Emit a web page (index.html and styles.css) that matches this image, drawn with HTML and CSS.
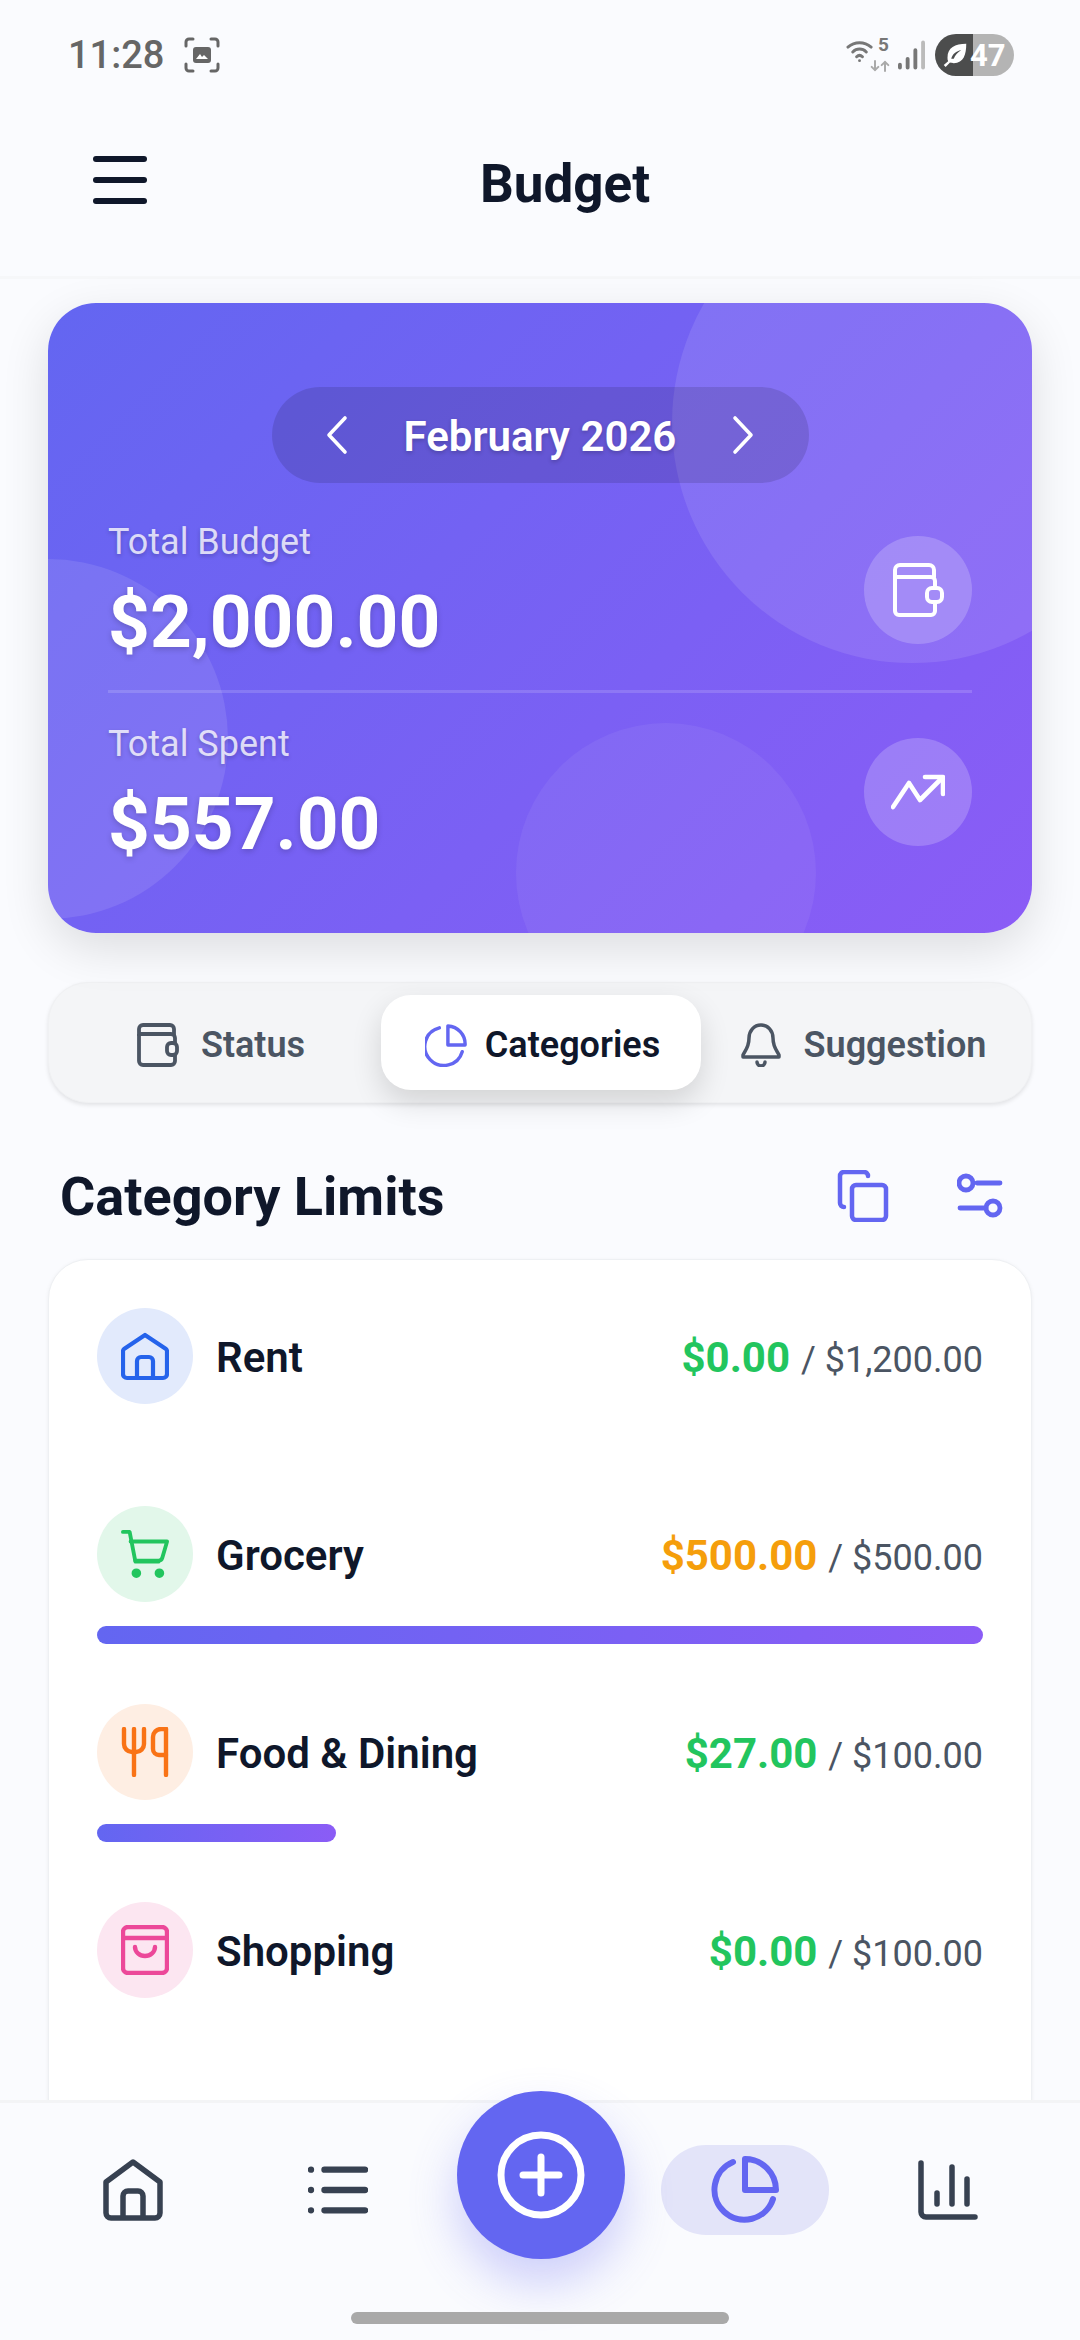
FILE: index.html
```html
<!DOCTYPE html>
<html lang="en">
<head>
  <meta charset="UTF-8" />
  <meta name="viewport" content="width=device-width, initial-scale=1.0"/>
  <title>Budget</title>
  <link rel="stylesheet" href="styles.css">
</head>
<body>

  <!-- Status bar -->
  <div class="status-bar">
    <div class="status-left">
      <span class="time">11:28</span>
      <svg class="capture" viewBox="0 0 36 36" fill="none" stroke="#666" stroke-width="3" stroke-linecap="round">
        <path d="M2 9V5a3 3 0 0 1 3-3h4M27 2h4a3 3 0 0 1 3 3v4M34 27v4a3 3 0 0 1-3 3h-4M9 34H5a3 3 0 0 1-3-3v-4"/>
        <rect x="9" y="10" width="18" height="16" rx="3" fill="#666" stroke="none"/>
        <path d="M12 22l4-5 2 3 2-2 4 4z" fill="#fff" stroke="none"/>
      </svg>
    </div>
    <div class="status-right">
      <div class="wifi">
        <svg viewBox="0 0 30 24" fill="none" stroke="#777" stroke-width="3" stroke-linecap="round">
          <path d="M2 8c7-6 17-6 24 0M7 13c4-4 10-4 14 0M11 18c2-2 4-2 6 0"/>
          <circle cx="14" cy="22" r="1.5" fill="#777" stroke="none"/>
        </svg>
        <span class="wifi-num">5</span>
        <svg class="wifi-arrows" viewBox="0 0 24 14" fill="none" stroke="#aaa" stroke-width="2.4" stroke-linecap="round" stroke-linejoin="round">
          <path d="M6 1v11M2 8l4 4 4-4M18 13V2M14 6l4-4 4 4"/>
        </svg>
      </div>
      <svg class="signal" viewBox="0 0 28 30" stroke-width="4" stroke-linecap="round">
        <path d="M2 28v-3M10 28V19M18 28V10" stroke="#777"/>
        <path d="M26 28V2" stroke="#bbb"/>
      </svg>
      <div class="battery">
        <svg viewBox="0 0 24 24" fill="#fff"><path d="M21 3c-9 0-15 3-15 11 0 1 0 2 .5 3L3 20l1.500 1.500 3.500-3.500c1 .5 2 .5 3 .5 8 0 10-7 10-15.500zM9 15c1-4 4-6 8-7-3 2-5 4-6 7z"/></svg>
        <span>47</span>
      </div>
    </div>
  </div>

  <!-- Header -->
  <header class="app-header">
    <div class="menu-btn"><span></span><span></span><span></span></div>
    <h1 class="page-title">Budget</h1>
  </header>

  <main class="content">

    <!-- Summary card -->
    <section class="hero">
      <div class="blob blob-a"></div>
      <div class="blob blob-b"></div>
      <div class="blob blob-c"></div>

      <div class="month-wrap">
        <div class="month-pill">
          <svg viewBox="0 0 24 40" fill="none" stroke="#fff" stroke-width="3.600" stroke-linecap="round" stroke-linejoin="round"><path d="M21 3L5 20l16 17"/></svg>
          <span>February 2026</span>
          <svg viewBox="0 0 24 40" fill="none" stroke="#fff" stroke-width="3.600" stroke-linecap="round" stroke-linejoin="round"><path d="M3 3l16 17L3 37"/></svg>
        </div>
      </div>

      <div class="stat stat-first">
        <div>
          <div class="stat-label">Total Budget</div>
          <div class="stat-value">$2,000.00</div>
        </div>
        <div class="stat-icon">
          <svg viewBox="0 0 54 54" fill="none" stroke="#fff" stroke-width="4" stroke-linejoin="round" stroke-linecap="round">
            <path d="M4 16V7a5 5 0 0 1 5-5h29a5 5 0 0 1 5 5v7"/>
            <path d="M4 14v34a4 4 0 0 0 4 4h32a4 4 0 0 0 4-4v-9M44 25v-7a4 4 0 0 0-4-4H4"/>
            <rect x="36" y="25" width="15" height="14" rx="5"/>
          </svg>
        </div>
      </div>
      <div class="stat-divider"></div>
      <div class="stat">
        <div>
          <div class="stat-label">Total Spent</div>
          <div class="stat-value">$557.00</div>
        </div>
        <div class="stat-icon">
          <svg viewBox="0 0 54 54" fill="none" stroke="#fff" stroke-width="4.600" stroke-linejoin="round" stroke-linecap="round">
            <path d="M2 42l16-24 11 17 22-22"/>
            <path d="M34 12h18v17"/>
          </svg>
        </div>
      </div>
    </section>

    <!-- Tabs -->
    <nav class="tabs">
      <div class="tab tab-status">
        <svg viewBox="0 0 42 44" fill="none" stroke="#4b5563" stroke-width="3.800" stroke-linejoin="round">
          <path d="M2 13V6a4 4 0 0 1 4-4h27a4 4 0 0 1 4 4v6"/>
          <path d="M2 11v27a4 4 0 0 0 4 4h28a4 4 0 0 0 4-4v-6M38 20v-5a4 4 0 0 0-4-4H2"/>
          <rect x="30" y="20" width="10" height="12" rx="4"/>
        </svg>
        <span>Status</span>
      </div>
      <div class="tab tab-active">
        <svg viewBox="0 0 44 44" fill="none" stroke="#6366f1" stroke-width="3.600" stroke-linecap="round" stroke-linejoin="round">
          <path d="M39 29A20 20 0 1 1 15 4"/>
          <path d="M24 2v20h18A19 19 0 0 0 24 2z"/>
        </svg>
        <span>Categories</span>
      </div>
      <div class="tab tab-suggest">
        <svg viewBox="0 0 42 44" fill="none" stroke="#4b5563" stroke-width="3.500" stroke-linecap="round" stroke-linejoin="round">
          <path d="M21 2c-7 0-12 6-12 13 0 10-5 14-6 17v2h36v-2c-1-3-6-7-6-17 0-7-5-13-12-13z"/>
          <path d="M17 39a4 4 0 0 0 8 0"/>
        </svg>
        <span>Suggestion</span>
      </div>
    </nav>

    <!-- Category limits -->
    <div class="section-head">
      <h2>Category Limits</h2>
      <div class="section-actions">
        <svg class="ico-copy" viewBox="0 0 52 52" fill="none" stroke="#6366f1" stroke-width="4.500" stroke-linejoin="round" stroke-linecap="round">
          <rect x="15" y="15" width="34" height="35" rx="4"/>
          <path d="M7 37a4 4 0 0 1-4-4V6a4 4 0 0 1 4-4h20a4 4 0 0 1 4 4"/>
        </svg>
        <svg class="ico-sliders" viewBox="0 0 46 46" fill="none" stroke="#6366f1" stroke-width="4.800" stroke-linecap="round">
          <circle cx="9" cy="10" r="7"/>
          <path d="M20 10h23"/>
          <circle cx="36" cy="35" r="7"/>
          <path d="M3 35h26"/>
        </svg>
      </div>
    </div>

    <section class="limit-card">
      <div class="limit">
        <div class="limit-row">
          <div class="cat-icon cat-blue">
            <svg viewBox="0 0 48 48" fill="none" stroke="#2563eb" stroke-width="4.200" stroke-linejoin="round">
              <path d="M3 17L24 3l21 14a3 3 0 0 1 1 2v23a4 4 0 0 1-4 4H6a4 4 0 0 1-4-4V19a3 3 0 0 1 1-2z"/>
              <path d="M16 46V29a4 4 0 0 1 4-4h8a4 4 0 0 1 4 4v17"/>
            </svg>
          </div>
          <span class="cat-name">Rent</span>
          <span class="amount"><b class="ok">$0.00</b> <i>/ $1,200.00</i></span>
        </div>
      </div>
      <div class="limit">
        <div class="limit-row">
          <div class="cat-icon cat-green">
            <svg viewBox="0 0 50 50" fill="none" stroke="#22c55e" stroke-width="4" stroke-linejoin="round" stroke-linecap="round">
              <path d="M2 2h7l6 31h24"/>
              <path d="M10 12h38l-5 17a4 4 0 0 1-4 3H15"/>
              <circle cx="16" cy="45" r="3" fill="#22c55e"/>
              <circle cx="40" cy="45" r="3" fill="#22c55e"/>
            </svg>
          </div>
          <span class="cat-name">Grocery</span>
          <span class="amount"><b class="warn">$500.00</b> <i>/ $500.00</i></span>
        </div>
        <div class="bar"><div class="bar-fill" style="width: 100%"></div></div>
      </div>
      <div class="limit">
        <div class="limit-row">
          <div class="cat-icon cat-orange">
            <svg viewBox="0 0 48 50" fill="none" stroke="#f97316" stroke-width="4.400" stroke-linecap="round" stroke-linejoin="round">
              <path d="M3 2v15a8 8 0 0 0 8 8h4a8 8 0 0 0 8-8V2"/>
              <path d="M13 2v46"/>
              <path d="M45 2h-5a8 8 0 0 0-8 8v12a6 6 0 0 0 6 6h7"/>
              <path d="M45 2v46"/>
            </svg>
          </div>
          <span class="cat-name">Food &amp; Dining</span>
          <span class="amount"><b class="ok">$27.00</b> <i>/ $100.00</i></span>
        </div>
        <div class="bar"><div class="bar-fill" style="width: 27%"></div></div>
      </div>
      <div class="limit">
        <div class="limit-row">
          <div class="cat-icon cat-pink">
            <svg viewBox="0 0 48 50" fill="none" stroke="#ec4899" stroke-width="4.400" stroke-linecap="round" stroke-linejoin="round">
              <rect x="2" y="2" width="44" height="46" rx="5"/>
              <path d="M2 13h44"/>
              <path d="M14 22a10 9 0 0 0 20 0"/>
            </svg>
          </div>
          <span class="cat-name">Shopping</span>
          <span class="amount"><b class="ok">$0.00</b> <i>/ $100.00</i></span>
        </div>
      </div>
    </section>
  </main>

  <!-- Bottom navigation -->
  <footer class="bottom-nav">
    <div class="nav-item">
      <svg viewBox="0 0 60 62" fill="none" stroke="#374151" stroke-width="5.500" stroke-linejoin="round">
        <path d="M3 23L30 3l27 20v31a5 5 0 0 1-5 5H8a5 5 0 0 1-5-5z"/>
        <path d="M20 59V37a5 5 0 0 1 5-5h10a5 5 0 0 1 5 5v22"/>
      </svg>
    </div>
    <div class="nav-item">
      <svg viewBox="0 0 62 48" fill="none" stroke="#374151" stroke-width="6.500" stroke-linecap="round">
        <path d="M17 3h42M17 24h42M17 45h42"/>
        <path d="M3 3h.1M3 24h.1M3 45h.1"/>
      </svg>
    </div>
    <div class="nav-spacer"></div>
    <div class="nav-item nav-active">
      <svg viewBox="0 0 68 68" fill="none" stroke="#6366f1" stroke-width="6" stroke-linecap="round" stroke-linejoin="round">
        <path d="M62 43A30 30 0 1 1 22 6"/>
        <path d="M34 3v31h31A31 31 0 0 0 34 3z"/>
      </svg>
    </div>
    <div class="nav-item">
      <svg viewBox="0 0 60 60" fill="none" stroke="#374151" stroke-width="5.500" stroke-linecap="round" stroke-linejoin="round">
        <path d="M3 3v49a5 5 0 0 0 5 5h49"/>
        <path d="M19 44V33M34 44V7M49 44V19"/>
      </svg>
    </div>

    <div class="fab">
      <svg viewBox="0 0 88 88" fill="none" stroke="#fff" stroke-width="7" stroke-linecap="round">
        <circle cx="44" cy="44" r="40"/>
        <path d="M44 26v36M26 44h36"/>
      </svg>
    </div>
    <div class="home-indicator"></div>
  </footer>

</body>
</html>
```

FILE: styles.css
```css
* {
  box-sizing: border-box;
}

html, body {
  margin: 0;
  padding: 0;
}

body {
  width: 1080px;
  height: 2340px;
  overflow: hidden;
  position: relative;
  background: #fafbfe;
  font-family: Roboto, "Noto Sans", sans-serif;
  color: #0f172a;
}

svg {
  display: block;
}

/* status bar */
.status-bar {
  height: 80px;
  padding: 30px 66px 0 68px;
  display: flex;
  align-items: center;
  justify-content: space-between;
}

.status-left,
.status-right {
  display: flex;
  align-items: center;
}

.time {
  font-size: 38px;
  font-weight: 500;
  color: #666;
}

.capture {
  width: 36px;
  height: 36px;
  margin-left: 20px;
}

.wifi {
  position: relative;
  width: 44px;
  height: 32px;
}

.wifi > svg:first-child {
  width: 29px;
  height: 24px;
}

.wifi-num {
  position: absolute;
  right: 1px;
  top: -6px;
  font-size: 19px;
  font-weight: 700;
  color: #777;
}

.wifi-arrows {
  position: absolute;
  right: 0;
  bottom: -2px;
  width: 20px;
  height: 14px;
}

.signal {
  width: 27px;
  height: 30px;
  margin-left: 8px;
}

.battery {
  width: 79px;
  height: 42px;
  margin-left: 10px;
  border-radius: 21px;
  background: linear-gradient(to right, #4c4d4d 48%, #b4b4b4 48%);
  display: flex;
  align-items: center;
  padding-left: 5px;
  color: #fff;
  font-size: 31px;
  font-weight: 700;
}

.battery svg {
  width: 30px;
  height: 30px;
}

/* header */
.app-header {
  height: 199px;
  padding: 0 97px 0 93px;
  display: flex;
  align-items: center;
  border-bottom: 3px solid #f6f7f9;
}

.menu-btn {
  width: 54px;
  display: flex;
  flex-direction: column;
  gap: 15px;
  margin-top: 3px;
}

.menu-btn span {
  height: 6px;
  border-radius: 3px;
  background: #0f172a;
}

.page-title {
  flex: 1;
  margin: 12px 0 0;
  text-align: center;
  font-size: 53px;
  font-weight: 700;
}

/* main */
.content {
  padding: 24px 48px 0;
}

.hero {
  position: relative;
  height: 630px;
  padding: 84px 60px 0;
  border-radius: 48px;
  overflow: hidden;
  background: linear-gradient(135deg, #6366f1, #8b5cf6);
  color: #fff;
  box-shadow: 0 16px 48px rgba(0, 0, 0, 0.12);
}

.blob {
  position: absolute;
  border-radius: 50%;
  background: rgba(255, 255, 255, 0.1);
}

.blob-a {
  width: 480px;
  height: 480px;
  top: -120px;
  right: -120px;
}

.blob-b {
  width: 360px;
  height: 360px;
  left: -180px;
  bottom: 14px;
}

.blob-c {
  width: 300px;
  height: 300px;
  left: 468px;
  bottom: -90px;
  background: rgba(255, 255, 255, 0.06);
}

.month-wrap {
  position: relative;
  display: flex;
  justify-content: center;
}

.month-pill {
  width: 537px;
  height: 96px;
  border-radius: 48px;
  background: rgba(0, 0, 0, 0.12);
  display: flex;
  align-items: center;
  justify-content: space-between;
  padding: 0 52px 0 52px;
  font-size: 42px;
  font-weight: 600;
  text-shadow: 0 2px 4px rgba(0, 0, 0, 0.2);
}

.month-pill span {
  padding-top: 2px;
}

.month-pill svg {
  width: 24px;
  height: 40px;
}

.stat {
  position: relative;
  height: 143px;
  display: flex;
  align-items: center;
  justify-content: space-between;
}

.stat-first {
  margin-top: 35px;
}

.stat-label {
  margin-top: 6px;
  font-size: 36px;
  line-height: 42px;
  color: rgba(255, 255, 255, 0.78);
  text-shadow: 0 2px 4px rgba(0, 0, 0, 0.2);
}

.stat-value {
  font-size: 73px;
  font-weight: 700;
  line-height: 84px;
  margin-top: 17px;
  text-shadow: 0 2px 6px rgba(0, 0, 0, 0.2);
}

.stat-icon {
  width: 108px;
  height: 108px;
  border-radius: 50%;
  background: rgba(255, 255, 255, 0.2);
  display: flex;
  align-items: center;
  justify-content: center;
}

.stat-icon svg {
  width: 54px;
  height: 54px;
}

.stat-divider {
  position: relative;
  height: 3px;
  margin: 29px 0 27px;
  background: rgba(255, 255, 255, 0.15);
}

/* tabs */
.tabs {
  margin-top: 49px;
  height: 121px;
  padding: 12px 0;
  border-radius: 40px;
  background: #f4f5f7;
  border: 1px solid #f0f1f3;
  box-shadow: 0 2px 4px rgba(0, 0, 0, 0.1);
  display: flex;
  font-size: 36px;
  font-weight: 600;
  color: #4b5563;
}

.tab {
  display: flex;
  align-items: center;
  justify-content: center;
  gap: 22px;
  padding-top: 4px;
}

.tab svg {
  width: 42px;
  height: 44px;
}

.tab-status {
  width: 332px;
  padding-left: 12px;
}

.tab-active {
  width: 320px;
  gap: 18px;
  padding-left: 3px;
  border-radius: 30px;
  background: #fff;
  color: #0f172a;
  box-shadow: 0 12px 30px rgba(0, 0, 0, 0.14);
}

.tab-suggest {
  flex: 1;
  padding-right: 6px;
}

/* section head */
.section-head {
  margin-top: 57px;
  height: 72px;
  padding: 0 29px 0 12px;
  display: flex;
  align-items: center;
  justify-content: space-between;
}

.section-head h2 {
  margin: 0;
  font-size: 54px;
  font-weight: 700;
}

.section-actions {
  display: flex;
  align-items: center;
  gap: 68px;
}

.ico-copy {
  width: 52px;
  height: 52px;
}

.ico-sliders {
  width: 46px;
  height: 46px;
}

/* limits */
.limit-card {
  margin-top: 27px;
  height: 900px;
  padding: 48px;
  border-radius: 40px;
  background: #fff;
  border: 1px solid #eef0f3;
  box-shadow: 0 1px 4px rgba(0, 0, 0, 0.06);
}

.limit {
  height: 198px;
}

.limit-row {
  display: flex;
  align-items: center;
  height: 96px;
}

.cat-icon {
  width: 96px;
  height: 96px;
  border-radius: 50%;
  display: flex;
  align-items: center;
  justify-content: center;
}

.cat-icon svg {
  width: 48px;
  height: 50px;
}

.cat-blue { background: #e2eafc; }
.cat-green { background: #e2f7ea; }
.cat-orange { background: #feeee3; }
.cat-pink { background: #fce6f1; }

.cat-name {
  flex: 1;
  margin-left: 23px;
  padding-top: 2px;
  font-size: 42px;
  font-weight: 600;
}

.amount {
  padding-top: 3px;
  font-size: 36px;
  color: #4b5563;
}

.amount b {
  font-size: 42px;
  font-weight: 700;
}

.amount i {
  font-style: normal;
  margin-left: 2px;
}

.ok { color: #22c55e; }
.warn { color: #f59e0b; }

.bar {
  margin-top: 24px;
  height: 18px;
}

.bar-fill {
  height: 18px;
  border-radius: 9px;
  background: linear-gradient(to right, #6366f1, #8b5cf6);
}

/* bottom nav */
.bottom-nav {
  position: absolute;
  left: 0;
  right: 0;
  bottom: 0;
  height: 240px;
  padding: 42px 0 0 103px;
  background: #fafbfe;
  border-top: 3px solid #f3f4f6;
  display: flex;
  align-items: flex-start;
}

.nav-item {
  width: 60px;
  height: 90px;
  display: flex;
  align-items: center;
  justify-content: center;
  flex-shrink: 0;
}

.nav-item svg {
  width: 60px;
  height: 62px;
}

.nav-item:nth-child(2) {
  margin-left: 145px;
}

.nav-spacer {
  width: 293px;
}

.nav-active {
  width: 168px;
  border-radius: 45px;
  background: #e3e4f9;
}

.nav-active svg {
  width: 68px;
  height: 68px;
}

.nav-item:nth-child(5) {
  margin-left: 89px;
}

.fab {
  position: absolute;
  left: 457px;
  top: -12px;
  width: 168px;
  height: 168px;
  border-radius: 50%;
  background: #6366f1;
  box-shadow: 0 24px 48px rgba(99, 102, 241, 0.3);
  display: flex;
  align-items: center;
  justify-content: center;
}

.fab svg {
  width: 88px;
  height: 88px;
}

.home-indicator {
  position: absolute;
  left: 351px;
  bottom: 16px;
  width: 378px;
  height: 12px;
  border-radius: 6px;
  background: #a9a9a9;
}
```
